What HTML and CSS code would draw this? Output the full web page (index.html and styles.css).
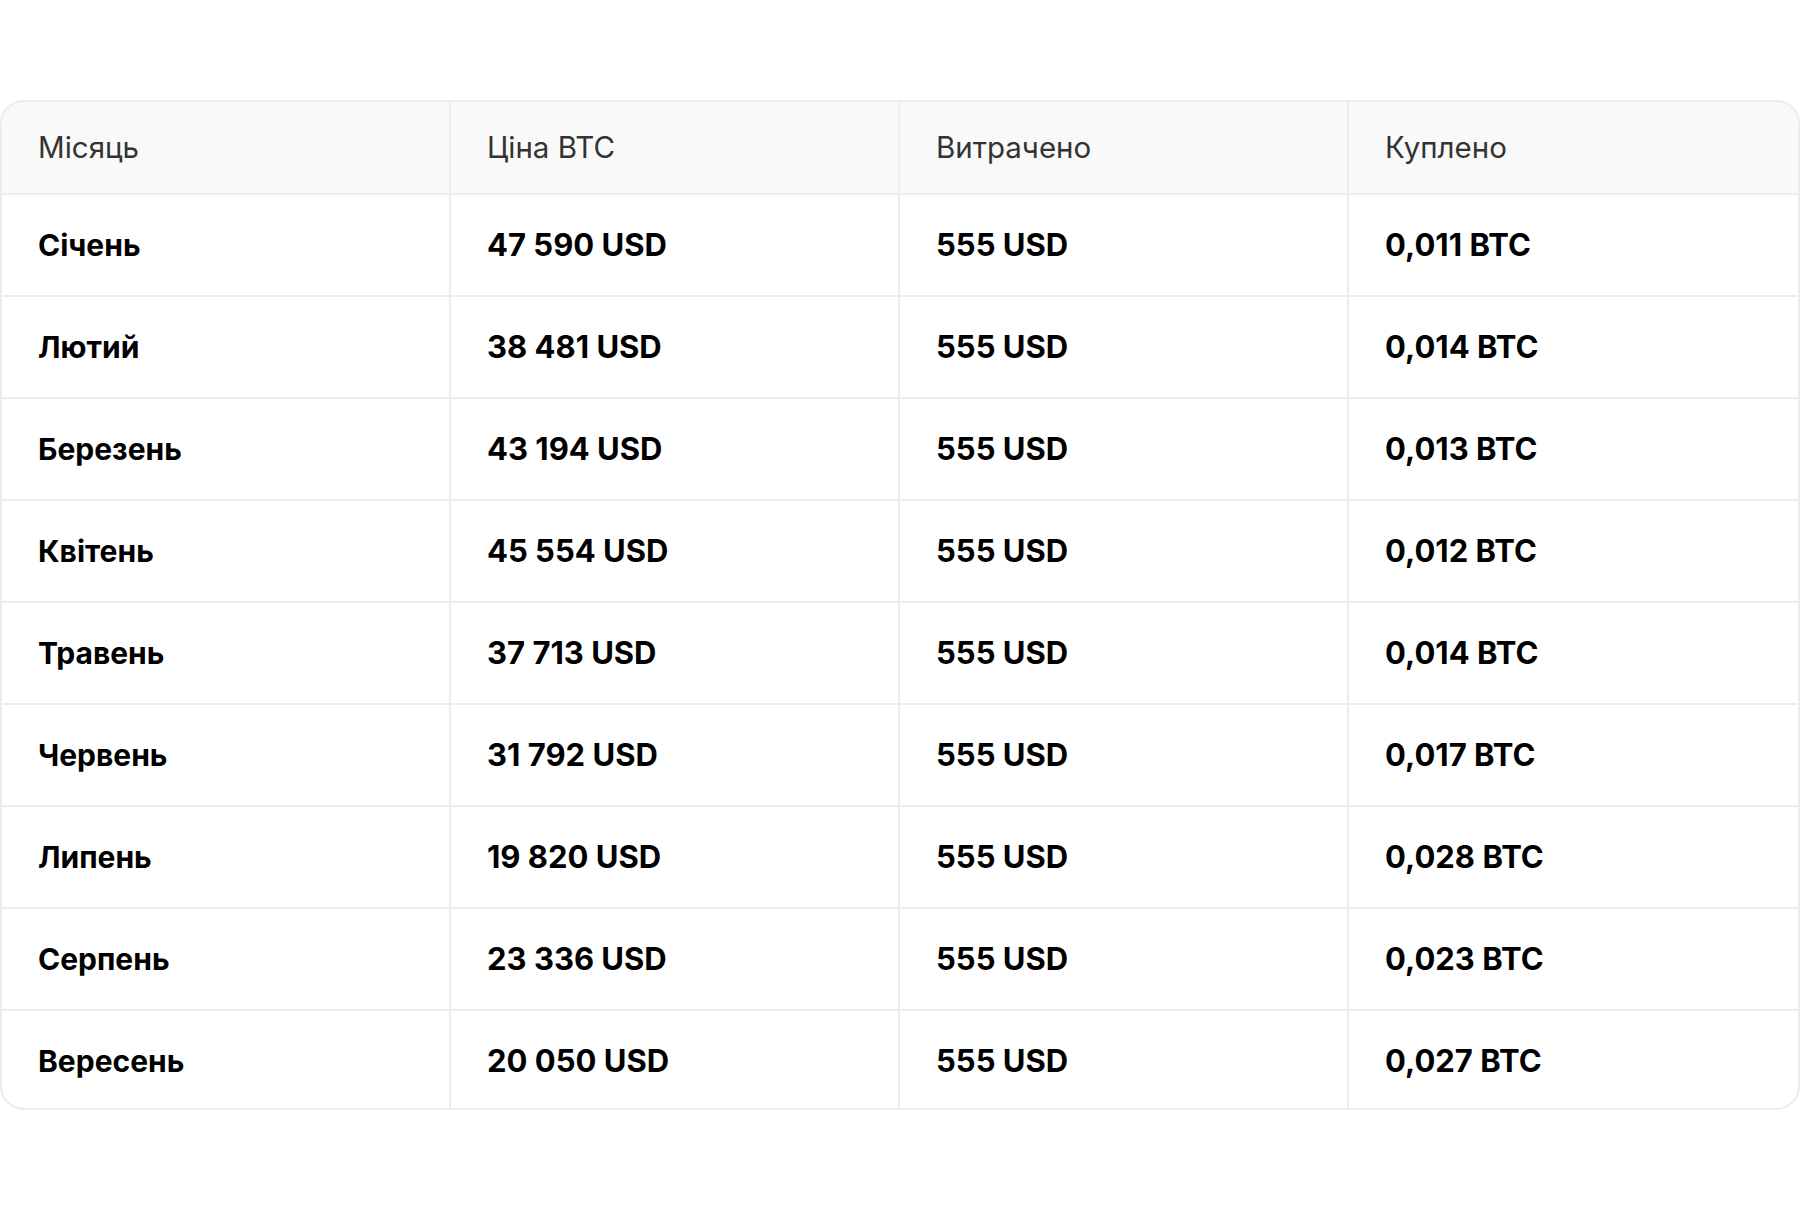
FILE: index.html
```html
<!DOCTYPE html>
<html lang="uk">
<head>
<meta charset="utf-8">
<title>DCA BTC</title>
<link rel="stylesheet" href="styles.css">
</head>
<body>
<main class="page">
  <table class="dca-table">
    <thead>
      <tr>
        <th>Місяць</th>
        <th>Ціна BTC</th>
        <th>Витрачено</th>
        <th>Куплено</th>
      </tr>
    </thead>
    <tbody>
      <tr><td>Січень</td><td class="num">47 590 USD</td><td class="num">555 USD</td><td class="num">0,011 BTC</td></tr>
      <tr><td>Лютий</td><td class="num">38 481 USD</td><td class="num">555 USD</td><td class="num">0,014 BTC</td></tr>
      <tr><td>Березень</td><td class="num">43 194 USD</td><td class="num">555 USD</td><td class="num">0,013 BTC</td></tr>
      <tr><td>Квітень</td><td class="num">45 554 USD</td><td class="num">555 USD</td><td class="num">0,012 BTC</td></tr>
      <tr><td>Травень</td><td class="num">37 713 USD</td><td class="num">555 USD</td><td class="num">0,014 BTC</td></tr>
      <tr><td>Червень</td><td class="num">31 792 USD</td><td class="num">555 USD</td><td class="num">0,017 BTC</td></tr>
      <tr><td>Липень</td><td class="num">19 820 USD</td><td class="num">555 USD</td><td class="num">0,028 BTC</td></tr>
      <tr><td>Серпень</td><td class="num">23 336 USD</td><td class="num">555 USD</td><td class="num">0,023 BTC</td></tr>
      <tr><td>Вересень</td><td class="num">20 050 USD</td><td class="num">555 USD</td><td class="num">0,027 BTC</td></tr>
    </tbody>
  </table>
</main>
</body>
</html>
```
FILE: styles.css
```css
html, body {
  margin: 0;
  padding: 0;
  background: #ffffff;
}

body {
  font-family: Inter, "Noto Sans", "Liberation Sans", sans-serif;
  color: #000;
}

.page {
  padding-top: 100px;
}

.dca-table {
  width: 1800px;
  table-layout: fixed;
  border-collapse: separate;
  border-spacing: 0;
  border: 2px solid #e9ecf0;
  border-radius: 24px;
  overflow: hidden;
}

.dca-table th,
.dca-table td {
  text-align: left;
  padding: 32px 36px;
  line-height: 36px;
  font-size: 30px;
  border-right: 2px solid #e9ecf0;
  border-bottom: 2px solid #e9ecf0;
  white-space: nowrap;
}

.dca-table th:last-child,
.dca-table td:last-child {
  border-right: none;
}

.dca-table th {
  background: #f9f9f9;
  font-weight: 400;
  font-size: 29.5px;
  color: #333333;
  padding-top: 27px;
  padding-bottom: 28px;
}

.dca-table td {
  font-weight: 700;
  color: #000;
}

.dca-table td.num {
  font-size: 31px;
}

.dca-table tbody tr:last-child td {
  border-bottom: none;
  padding-top: 32px;
  padding-bottom: 29px;
}
```
